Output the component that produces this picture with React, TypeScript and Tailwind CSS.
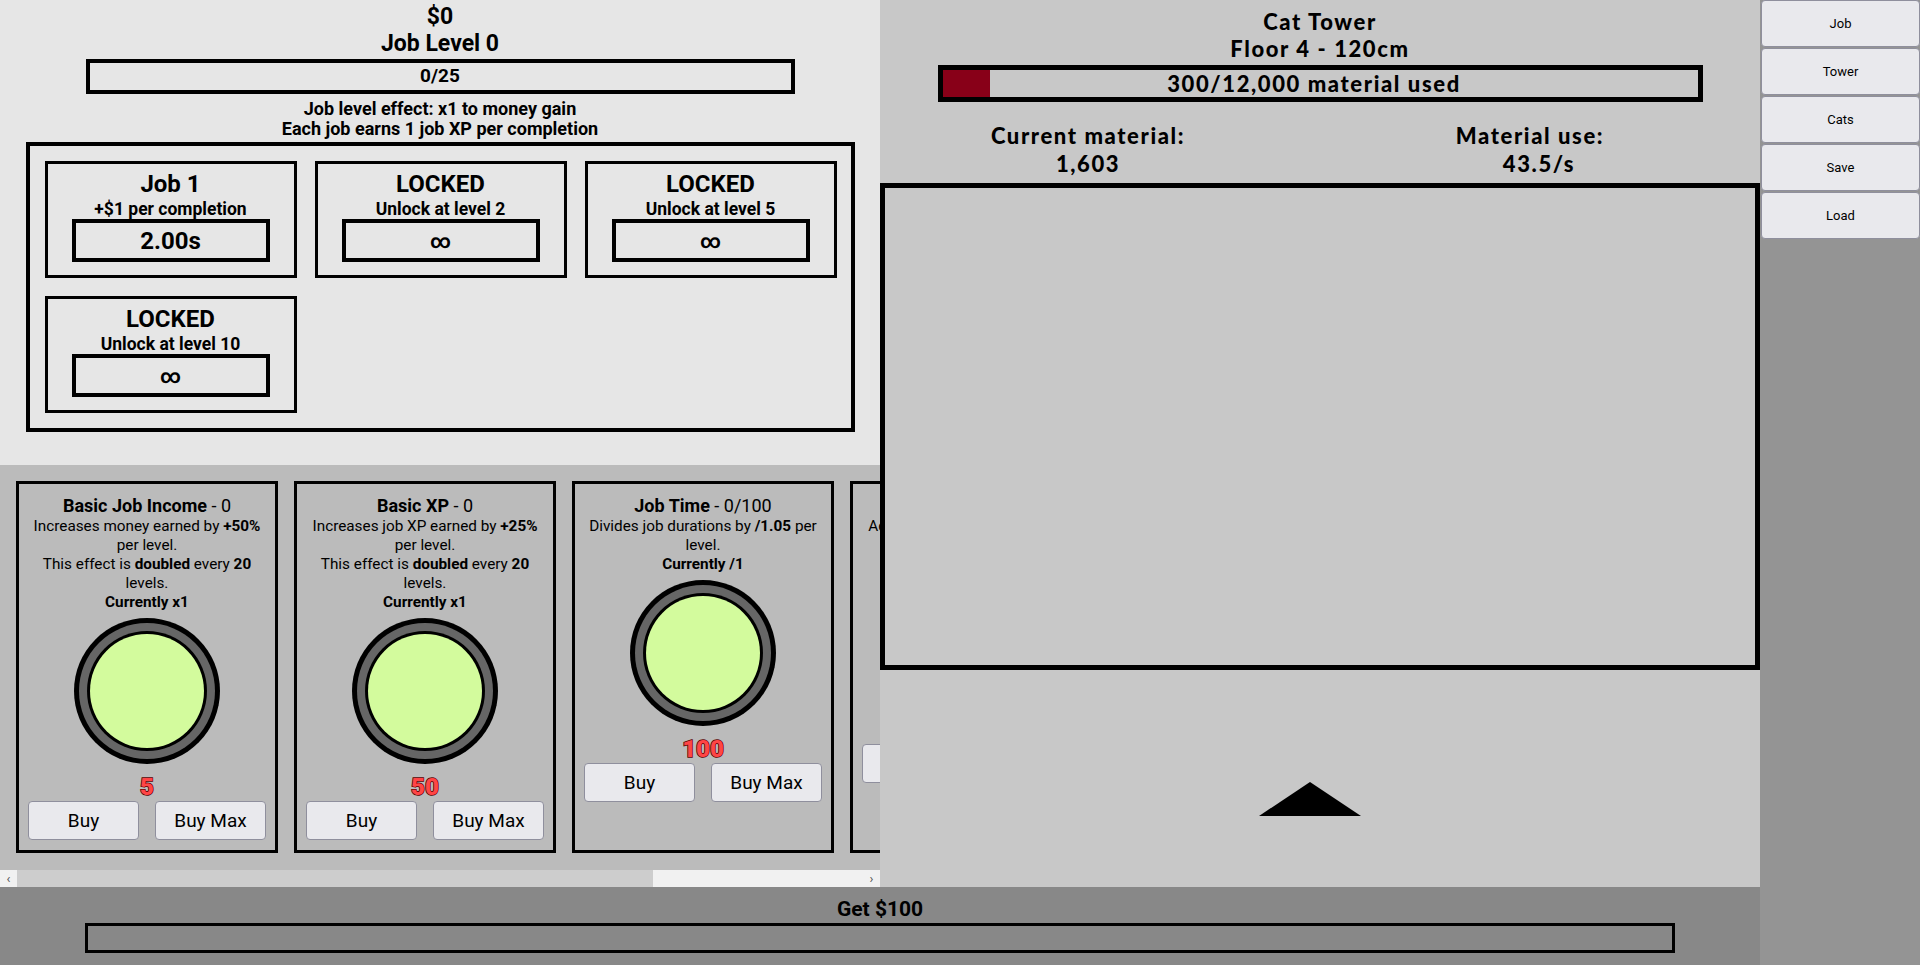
import React from 'react';

const jobs = [
  { title: 'Job 1', sub: '+$1 per completion', value: '2.00s' },
  { title: 'LOCKED', sub: 'Unlock at level 2', value: '∞' },
  { title: 'LOCKED', sub: 'Unlock at level 5', value: '∞' },
  { title: 'LOCKED', sub: 'Unlock at level 10', value: '∞' },
];

function JobCard({ title, sub, value }: { title: string; sub: string; value: string }) {
  return (
    <div className="flex h-[117px] flex-col items-center border-[3px] border-black pt-[5px]">
      <div className="text-[24px] font-bold leading-[30px]">{title}</div>
      <div className="text-[17.5px] font-bold leading-[20px]">{sub}</div>
      <div
        className={`flex h-[43px] w-[198px] items-center justify-center border-4 border-black font-bold ${
          value === '∞' ? 'text-[20px]' : 'text-[24px]'
        }`}
      >
        {value}
      </div>
    </div>
  );
}

function Knob() {
  return (
    <div className="mt-[6px] h-[146px] w-[146px] rounded-full bg-black p-[5px]">
      <div className="h-full w-full rounded-full bg-[#666666] p-[8px]">
        <div className="h-full w-full rounded-full bg-black p-[3px]">
          <div className="h-full w-full rounded-full bg-[#d3fb9d]" />
        </div>
      </div>
    </div>
  );
}

function Upgrade({ name, level, children, cost }: { name: string; level: string; children: React.ReactNode; cost: string }) {
  return (
    <div className="flex w-[262px] shrink-0 flex-col items-center border-[3px] border-black px-[9px] pt-[10px] text-center text-[15.3px] leading-[19px]">
      <div className="text-[18px] leading-[23px]">
        <span className="font-bold">{name}</span> - {level}
      </div>
      {children}
      <Knob />
      <div className="mt-[10px] text-[24px] font-black leading-[26px] text-[#ff4545] [-webkit-text-stroke:1.5px_#5a0000] [paint-order:stroke_fill]">
        {cost}
      </div>
      <div className="mt-[1px] flex w-full justify-between">
        <button className="h-[39px] w-[111px] rounded-[4px] border border-[#8f8f9d] bg-[#e9e9ed] text-[19px]">Buy</button>
        <button className="h-[39px] w-[111px] rounded-[4px] border border-[#8f8f9d] bg-[#e9e9ed] text-[19px]">Buy Max</button>
      </div>
    </div>
  );
}

function LeftPanel() {
  return (
    <div className="flex w-[880px] flex-col">
      <div className="flex h-[465px] flex-col items-center bg-[#e6e6e6] pt-[4px]">
        <div className="text-[23px] font-bold leading-[26px]">$0</div>
        <div className="text-[23px] font-bold leading-[28px]">Job Level 0</div>
        <div className="mt-[1px] flex h-[35px] w-[709px] items-center justify-center border-4 border-black text-[19px] font-bold">
          0/25
        </div>
        <div className="mt-[5px] text-[18px] font-bold leading-[20px]">Job level effect: x1 to money gain</div>
        <div className="text-[18px] font-bold leading-[20px]">Each job earns 1 job XP per completion</div>
        <div className="mt-[3px] grid w-[829px] grid-cols-[repeat(3,252px)] gap-[18px] border-4 border-black p-[15px]">
          {jobs.map((j, i) => (
            <JobCard key={i} {...j} />
          ))}
        </div>
      </div>

      <div className="flex h-[405px] gap-4 overflow-hidden bg-[#bbbbbb] pb-[17px] pl-4 pt-4">
        <Upgrade name="Basic Job Income" level="0" cost="5">
          <div>
            Increases money earned by <b>+50%</b> per level.
          </div>
          <div>
            This effect is <b>doubled</b> every <b>20</b> levels.
          </div>
          <div className="font-bold">Currently x1</div>
        </Upgrade>
        <Upgrade name="Basic XP" level="0" cost="50">
          <div>
            Increases job XP earned by <b>+25%</b> per level.
          </div>
          <div>
            This effect is <b>doubled</b> every <b>20</b> levels.
          </div>
          <div className="font-bold">Currently x1</div>
        </Upgrade>
        <Upgrade name="Job Time" level="0/100" cost="100">
          <div>
            Divides job durations by <b>/1.05</b> per level.
          </div>
          <div className="font-bold">Currently /1</div>
        </Upgrade>
        <Upgrade name="Job Bonus" level="0" cost="250">
          <div>Adds +$1 to job income per level.</div>
          <div className="font-bold">Currently +$0</div>
        </Upgrade>
      </div>

      {/* horizontal scrollbar of the upgrade strip */}
      <div className="flex h-[17px] items-center bg-[#f1f1f1] text-[13px] text-[#505050]">
        <div className="flex w-[17px] justify-center">‹</div>
        <div className="h-full w-[636px] bg-[#cdcdcd]" />
        <div className="flex-1" />
        <div className="flex w-[17px] justify-center">›</div>
      </div>
    </div>
  );
}

function TowerPanel() {
  return (
    <div className="flex w-[880px] flex-col bg-[#c8c8c8] font-['Lato',sans-serif] font-black tracking-[1.6px]">
      <div className="pt-[8px] text-center text-[22px] leading-[27px]">Cat Tower</div>
      <div className="text-center text-[22px] leading-[27px]">Floor 4 - 120cm</div>
      <div className="relative mx-auto mt-[3px] h-[37px] w-[765px] border-[5px] border-black">
        <div className="h-full w-[47px] bg-[#880018]" />
        <div className="absolute inset-0 flex items-center justify-center pr-[12px] text-[22px]">300/12,000 material used</div>
      </div>
      <div className="mt-[20px] flex text-[22px] leading-[28px]">
        <div className="ml-[58px] w-[300px] text-center">
          <div>Current material:</div>
          <div>1,603</div>
        </div>
        <div className="ml-[142px] w-[300px] text-center">
          <div>Material use:</div>
          <div className="pl-[18px]">43.5/s</div>
        </div>
      </div>
      <div className="mt-[5px] h-[487px] border-[5px] border-black" />
      <div className="flex flex-1 justify-center pr-[20px] pt-[112px]">
        <svg width="102" height="35" viewBox="0 0 102 35">
          <polygon points="51,0 102,34 0,34" fill="#000" />
        </svg>
      </div>
    </div>
  );
}

function Sidebar() {
  return (
    <div className="flex w-[160px] flex-col gap-[1px] bg-[#949494] pl-[1px]">
      {['Job', 'Tower', 'Cats', 'Save', 'Load'].map((t) => (
        <button key={t} className="h-[47px] w-[159px] rounded-[4px] border border-[#8f8f9d] bg-[#e9e9ed] text-[13px]">
          {t}
        </button>
      ))}
    </div>
  );
}

export default function App() {
  return (
    <div className="flex h-[965px] w-[1920px] overflow-hidden font-['Roboto',sans-serif] text-black">
      <div className="flex w-[1760px] flex-col">
        <div className="flex h-[887px]">
          <LeftPanel />
          <TowerPanel />
        </div>
        <div className="flex h-[78px] flex-col items-center bg-[#888888] pt-[8px]">
          <div className="text-[21px] font-bold leading-[28px]">Get $100</div>
          <div className="h-[30px] w-[1590px] border-[3px] border-black" />
        </div>
      </div>
      <Sidebar />
    </div>
  );
}
